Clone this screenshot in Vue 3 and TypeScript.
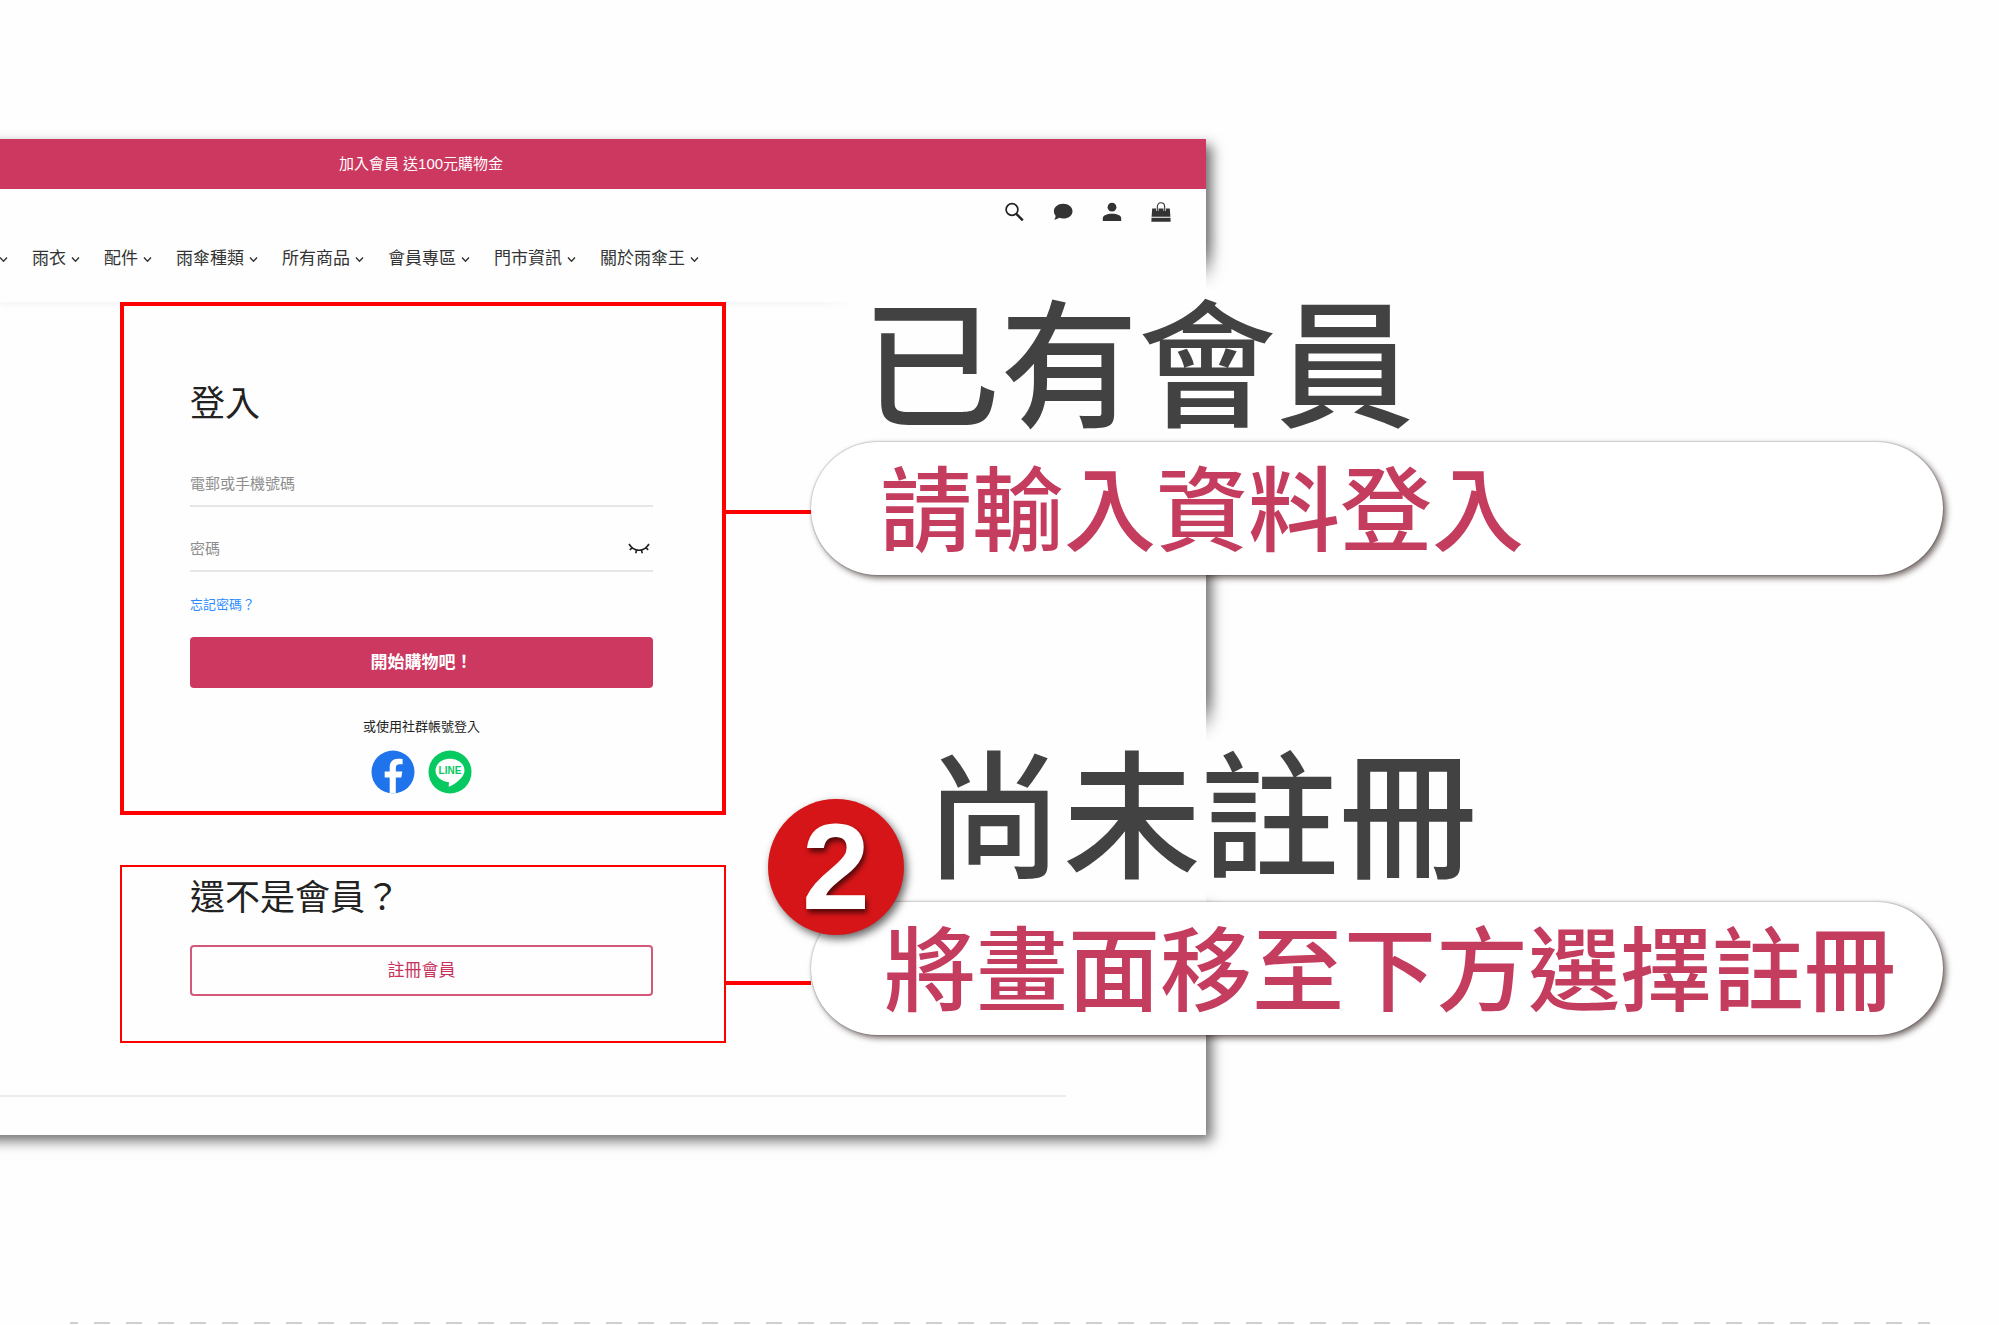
<script setup lang="ts">
import { ref } from 'vue'

const navItems: string[] = ['雨衣', '配件', '雨傘種類', '所有商品', '會員專區', '門市資訊', '關於雨傘王']
const account = ref('')
const password = ref('')
</script>

<template>
  <div class="page" lang="zh-Hant">
    <main class="stage">
      <div class="shop">
        <header class="header">
          <p class="promo">加入會員 送100元購物金</p>
          <div class="tools">
            <button type="button" aria-label="搜尋">
              <svg viewBox="0 0 20 20"><circle cx="8" cy="7.500" r="5.900" fill="none" stroke="#222" stroke-width="1.700" /><path d="M12.300 11.800 18.800 18.300" stroke="#222" stroke-width="2.400" /></svg>
            </button>
            <button type="button" aria-label="訊息">
              <svg viewBox="0 0 20 20"><path d="M10.200 1.800c5.200 0 9.300 3.300 9.300 7.400s-4.100 7.400-9.300 7.400c-1.500 0-2.900-.3-4.100-.8-1.400 1.100-3.100 1.800-5 1.800 1-1.100 1.600-2.400 1.500-3.800C1.500 12.500.9 11 .9 9.200.9 5.100 5 1.800 10.200 1.800Z" fill="#333" /></svg>
            </button>
            <button type="button" aria-label="會員">
              <svg viewBox="0 0 20 20"><circle cx="10" cy="5.200" r="4.400" fill="#333" /><path d="M.8 19v-2.600C.8 13.400 5 11.800 10 11.800s9.200 1.600 9.200 4.600V19Z" fill="#333" /></svg>
            </button>
            <button type="button" aria-label="購物車">
              <svg viewBox="0 0 20 20"><path d="M1.200 6.500h17.600l.6 8.300H.6ZM.5 15.800h19l.1 4H.4Z" fill="#333" /><path d="M6.300 9V5.200C6.300 2.500 7.600.8 10 .8s3.700 1.700 3.700 4.400V9" fill="none" stroke="#fff" stroke-width="2.400" /><path d="M6.300 9V5.200C6.300 2.500 7.600.8 10 .8s3.700 1.700 3.700 4.400V9" fill="none" stroke="#333" stroke-width="1.100" /></svg>
            </button>
          </div>
          <nav class="nav">
            <svg class="chevron" viewBox="0 0 9 9"><path d="m1 2.500 3.500 3.700L8 2.500" /></svg>
            <a v-for="item in navItems" :key="item" href="#">
              {{ item }}<svg class="chevron" viewBox="0 0 9 9"><path d="m1 2.500 3.500 3.700L8 2.500" /></svg>
            </a>
          </nav>
        </header>

        <form class="panel login" @submit.prevent>
          <h2>登入</h2>
          <div class="field">
            <input v-model="account" type="text" placeholder="電郵或手機號碼" aria-label="電郵或手機號碼" />
          </div>
          <div class="field">
            <input v-model="password" type="password" placeholder="密碼" aria-label="密碼" />
            <button class="eye" type="button" aria-label="顯示密碼">
              <svg viewBox="0 0 22 12"><path d="M1 1C6 9.300 16 9.300 21 1M4.300 4.700 1.800 6.900M8.500 7.200l-.8 3M13.500 7.200l.8 3M17.700 4.700l2.500 2.200" fill="none" stroke="#222" stroke-width="1.600" /></svg>
            </button>
          </div>
          <a class="forgot" href="#">忘記密碼？</a>
          <button class="btn primary" type="submit">開始購物吧！</button>
          <p class="social-text">或使用社群帳號登入</p>
          <div class="social">
            <button type="button" aria-label="Facebook">
              <svg viewBox="0 0 44 44"><circle cx="22" cy="22" r="21.500" fill="#1f74ec" /><path d="M18.700 43.500V27.600h-5v-6h5v-4.400c0-5.800 3.400-8.500 8.400-8.500 1.900 0 3.600.2 4.500.4v5.200h-3c-2.700 0-3.800 1.400-3.800 3.700v3.600h6.500l-1 6h-5.500v15.900Z" fill="#fff" /></svg>
            </button>
            <button type="button" aria-label="LINE">
              <svg viewBox="0 0 44 44"><circle cx="22" cy="22" r="21.500" fill="#06c95f" /><path d="M22 8.700c8.200 0 14.500 5.200 14.500 11.800 0 3.600-2 6.300-4.800 9-3.200 3-7 5.700-10 7-1 .4-1.100-.2-1-1l.3-3.300C13.400 31.500 7.500 26.800 7.500 20.500 7.500 13.900 13.800 8.700 22 8.700Z" fill="#fff" /><text x="22" y="24" text-anchor="middle" font-size="10" font-weight="700" fill="#06c95f">LINE</text></svg>
            </button>
          </div>
        </form>

        <section class="panel register">
          <h2>還不是會員？</h2>
          <button class="btn outline" type="button">註冊會員</button>
        </section>

        <hr class="divider" />
      </div>

      <aside class="callouts">
        <section class="callout">
          <h1>已有會員</h1>
          <p class="pill first">請輸入資料登入</p>
        </section>
        <section class="callout second">
          <h1>尚未註冊</h1>
          <p class="pill">將畫面移至下方選擇註冊</p>
          <span class="badge">2</span>
        </section>
      </aside>
    </main>
    <div class="dashes"></div>
  </div>
</template>

<style>
body {
  margin: 0;
  background: #fefefe;
}
</style>

<style scoped>
* {
  box-sizing: border-box;
}
.page {
  padding-top: 139px;
  overflow: hidden;
  font-family: 'Liberation Sans', 'Noto Sans CJK TC', sans-serif;
  color: #222;
}
h1, h2, p {
  margin: 0;
}
button {
  margin: 0;
  padding: 0;
  border: 0;
  background: none;
  font-family: inherit;
  cursor: pointer;
}
svg {
  display: block;
}
.stage {
  display: grid;
}
.shop, .callouts {
  grid-area: 1 / 1;
}
.shop {
  margin: 0 793px 0 -24px;
  padding: 0 0 38px 24px;
  background: #fefefe;
  box-shadow: 6px 6px 12px rgba(0, 0, 0, 0.55);
}
.header {
  height: 163px;
  box-shadow: 0 3px 6px rgba(0, 0, 0, 0.04);
}
.promo {
  padding-right: 364px;
  background: #cc385f;
  color: #fff;
  font-size: 15px;
  line-height: 50px;
  text-align: center;
}
.tools {
  display: flex;
  justify-content: flex-end;
  gap: 29px;
  padding: 13px 35px 0 0;
}
.tools svg {
  width: 20px;
  height: 20px;
}
.nav {
  display: flex;
  align-items: center;
  gap: 24px;
  margin: 24px 0 0 -1px;
}
.nav a {
  display: flex;
  align-items: center;
  gap: 5px;
  color: #333;
  font-size: 17px;
  line-height: 26px;
  text-decoration: none;
  white-space: nowrap;
}
.chevron {
  width: 9px;
  height: 9px;
  fill: none;
  stroke: #333;
  stroke-width: 1.4;
}
.panel {
  display: flex;
  flex-direction: column;
  margin-left: 120px;
  width: 606px;
}
.panel h2 {
  font-size: 35px;
  font-weight: 400;
  line-height: 48px;
}
.login {
  padding: 74px 69px 17px 66px;
  border: 4px solid #f00;
}
.field {
  display: flex;
  align-items: center;
  margin-top: 21px;
  height: 44px;
  border-bottom: 2px solid #e6e6e6;
}
h2 + .field {
  margin-top: 35px;
}
.field input {
  flex: 1;
  min-width: 0;
  padding: 0;
  border: 0;
  outline: 0;
  background: none;
  color: #222;
  font-family: inherit;
  font-size: 15px;
  line-height: 24px;
}
.field input::placeholder {
  color: #8e8e8e;
  opacity: 1;
}
.eye {
  margin-right: 3px;
}
.eye svg {
  width: 22px;
  height: 12px;
}
.forgot {
  align-self: flex-start;
  margin: 23px 0 22px;
  color: #2a8cff;
  font-size: 13px;
  line-height: 20px;
  text-decoration: none;
}
.btn {
  height: 51px;
  padding-bottom: 4px;
  border-radius: 4px;
  font-size: 17px;
}
.primary {
  background: #cc385f;
  color: #fff;
  font-weight: 700;
}
.social-text {
  margin-top: 29px;
  font-size: 13px;
  line-height: 20px;
  text-align: center;
}
.social {
  display: flex;
  justify-content: center;
  gap: 13px;
  margin-top: 13px;
}
.social svg {
  width: 44px;
  height: 44px;
}
.register {
  margin-top: 50px;
  padding: 7px 71px 45px 68px;
  border: 2px solid #f00;
}
.outline {
  margin-top: 23px;
  border: 2px solid #d4587a;
  color: #c9305a;
}
.divider {
  margin: 52px 140px 0 0;
  border: 0;
  border-top: 2px solid #ebebeb;
}
.callouts {
  position: relative;
  margin: 151px 56px 0 811px;
  pointer-events: none;
}
.callout {
  position: relative;
}
.callout h1 {
  width: 552px;
  margin-left: 51px;
  padding-top: 4px;
  background: #fefefe;
  box-shadow: 0 0 24px 24px #fefefe;
  color: #424242;
  font-size: 138px;
  font-weight: 500;
  line-height: 148px;
  white-space: nowrap;
}
.second {
  margin-top: 166px;
}
.second h1 {
  margin: 0 0 9px 114px;
}
.pill {
  position: relative;
  height: 133px;
  padding: 4px 0 0 73px;
  border-radius: 67px;
  background: #fff;
  box-shadow: 0 0 2px rgba(0, 0, 0, 0.4), 3px 3px 6px rgba(40, 25, 20, 0.65);
  color: #c43c5e;
  font-size: 92px;
  font-weight: 500;
  line-height: 132px;
  white-space: nowrap;
}
.pill.first {
  padding-left: 69px;
}
.pill::before {
  content: '';
  position: absolute;
  top: 79px;
  right: 100%;
  width: 86px;
  height: 4px;
  background: #f00;
}
.pill.first::before {
  top: 68px;
}
.badge {
  position: absolute;
  top: 58px;
  left: -43px;
  width: 136px;
  height: 136px;
  border-radius: 50%;
  background: #d61518;
  box-shadow: 3px 4px 8px rgba(0, 0, 0, 0.6);
  color: #fff;
  font-size: 122px;
  font-weight: 700;
  line-height: 136px;
  text-align: center;
  text-shadow: 2px 4px 5px rgba(0, 0, 0, 0.6);
}
.dashes {
  height: 2px;
  margin: 187px 69px 0 70px;
  background: repeating-linear-gradient(90deg, #d0d0d0 0 8px, transparent 8px 24px, #d0d0d0 24px 32px);
}
</style>
